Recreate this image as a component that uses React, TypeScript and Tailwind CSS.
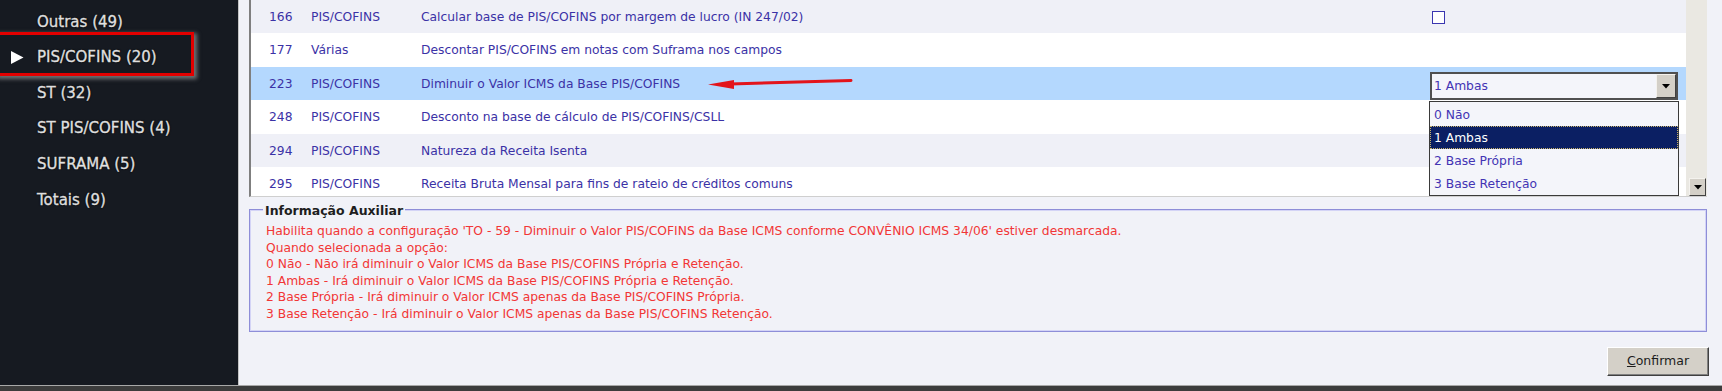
import React from "react";

type Row = {
  id: string;
  tipo: string;
  desc: string;
  bg: string;
  value?: "check" | "combo";
};

const rows: Row[] = [
  { id: "166", tipo: "PIS/COFINS", desc: "Calcular base de PIS/COFINS por margem de lucro (IN 247/02)", bg: "bg-[#eff0f7]", value: "check" },
  { id: "177", tipo: "Várias", desc: "Descontar PIS/COFINS em notas com Suframa nos campos", bg: "bg-white" },
  { id: "223", tipo: "PIS/COFINS", desc: "Diminuir o Valor ICMS da Base PIS/COFINS", bg: "bg-[#b4d8fe]", value: "combo" },
  { id: "248", tipo: "PIS/COFINS", desc: "Desconto na base de cálculo de PIS/COFINS/CSLL", bg: "bg-white" },
  { id: "294", tipo: "PIS/COFINS", desc: "Natureza da Receita Isenta", bg: "bg-[#eff0f7]" },
  { id: "295", tipo: "PIS/COFINS", desc: "Receita Bruta Mensal para fins de rateio de créditos comuns", bg: "bg-white" },
];

const sideItems = ["Outras (49)", "PIS/COFINS (20)", "ST (32)", "ST PIS/COFINS (4)", "SUFRAMA (5)", "Totais (9)"];

const infoLines = [
  "Habilita quando a configuração 'TO - 59 - Diminuir o Valor PIS/COFINS da Base ICMS conforme CONVÊNIO ICMS 34/06' estiver desmarcada.",
  "Quando selecionada a opção:",
  "0 Não - Não irá diminuir o Valor ICMS da Base PIS/COFINS Própria e Retenção.",
  "1 Ambas - Irá diminuir o Valor ICMS da Base PIS/COFINS Própria e Retenção.",
  "2 Base Própria - Irá diminuir o Valor ICMS apenas da Base PIS/COFINS Própria.",
  "3 Base Retenção - Irá diminuir o Valor ICMS apenas da Base PIS/COFINS Retenção.",
];

const options = ["0 Não", "1 Ambas", "2 Base Própria", "3 Base Retenção"];

function DownTri() {
  return (
    <svg width="8" height="5" viewBox="0 0 8 5">
      <polygon points="0,0 8,0 4,4.5" fill="#000" />
    </svg>
  );
}

function Combo() {
  return (
    <div className="relative mt-[5px] w-[248px] h-[28px] border-2 border-[#505050] bg-[#f4f5fa] flex items-center">
      <span className="pl-[2px] text-[#4334b4]">1 Ambas</span>
      <div className="ml-auto w-[20px] h-[24px] bg-[#d4d0c8] border border-t-[#f4f2ee] border-l-[#f4f2ee] border-b-[#404040] border-r-[#404040] flex items-center justify-center">
        <DownTri />
      </div>
      <div className="absolute left-[-3px] top-[27px] w-[250px] h-[95px] border border-[#3a3a3a] bg-[#f4f5fa] pt-[1px] flex flex-col">
        {options.map((o, i) => (
          <div
            key={o}
            className={
              i === 1
                ? "h-[23px] flex items-center pl-[3px] bg-[#0b1f63] text-white border border-dotted border-[#c9b26a]"
                : "h-[23px] flex items-center pl-[4px] text-[#4334b4]"
            }
          >
            {o}
          </div>
        ))}
      </div>
    </div>
  );
}

export default function App() {
  return (
    <div className="relative w-[1722px] h-[391px] overflow-hidden flex flex-col bg-[#f1f2f8] font-['Tahoma','DejaVu_Sans',sans-serif]">
      <div className="flex flex-1 min-h-0">
        {/* Sidebar */}
        <div className="relative w-[238px] bg-[#161a21] pt-[4px]">
          {sideItems.map((s, i) => (
            <div key={s} className="relative h-[35.6px] flex items-center pl-[37px] text-[15px] text-[#e2e2e2] [-webkit-text-stroke:0.35px_#d8d8d8] [text-shadow:0_0_2px_#000,0_0_1px_#000]">
              {i === 1 && (
                <svg className="absolute left-[11px] top-[11px]" width="13" height="13" viewBox="0 0 13 13">
                  <polygon points="0,0 12.5,6.5 0,13" fill="#ffffff" />
                </svg>
              )}
              {s}
            </div>
          ))}
          <div className="absolute left-[-4px] top-[32px] w-[198px] h-[44px] border-[3px] border-[#e30000] shadow-[2px_2px_4px_1px_rgba(150,150,150,0.7)]" />
        </div>

        {/* Main */}
        <div className="flex-1 flex flex-col border-l border-[#c4c4c4] pl-[10px] pr-[15px]">
          {/* Grid */}
          <div className="flex h-[197px] border-l-2 border-l-[#7f7f7f] border-b border-b-[#cfcfcf]">
            <div className="flex-1 overflow-hidden text-[12.3px] text-[#3b32a6]">
              {rows.map((r) => (
                <div key={r.id} className={`h-[33.4px] pt-[1px] flex items-center ${r.bg}`}>
                  <div className="w-[60px] pl-[18px]">{r.id}</div>
                  <div className="w-[110px]">{r.tipo}</div>
                  <div className="w-[1009px]">{r.desc}</div>
                  <div className="w-[248px] flex">
                    {r.value === "check" && (
                      <div className="ml-[2px] w-[13px] h-[13px] border-[1.5px] border-[#3a36b0] bg-white" />
                    )}
                    {r.value === "combo" && <Combo />}
                  </div>
                </div>
              ))}
            </div>
            <div className="w-[21px] bg-[#eae8e2] flex flex-col justify-end pl-[3px] pr-[1px]">
              <div className="w-[17px] h-[18px] bg-[#d4d0c8] border border-t-[#f4f2ee] border-l-[#f4f2ee] border-b-[#404040] border-r-[#404040] flex items-center justify-center">
                <DownTri />
              </div>
            </div>
          </div>

          {/* Info group */}
          <div className="relative mt-[12px] h-[123px] border border-[#8e8ed8] shadow-[inset_0_0_0_1px_#d4d4f6] pl-[16px] pt-[13px]">
            <div className="absolute -top-[6px] left-[13px] px-[2px] bg-[#f1f2f8] text-[12.5px] font-bold text-[#1e1e1e] leading-[14px]">
              Informação Auxiliar
            </div>
            <div className="text-[12.3px] leading-[16.6px] text-[#f23636]">
              {infoLines.map((l) => (
                <div key={l}>{l}</div>
              ))}
            </div>
          </div>

          {/* Buttons */}
          <div className="flex justify-end mt-[15px] -mr-[2px]">
            <button className="w-[102px] h-[29px] bg-[#d4d0c8] border border-t-[#ffffff] border-l-[#ffffff] border-b-[#404040] border-r-[#404040] shadow-[inset_-1px_-1px_0_#808080] text-[12.5px] text-[#1c1c1c]">
              <span className="underline">C</span>onfirmar
            </button>
          </div>
        </div>
      </div>
      <div className="h-[6px] border-t border-[#a8a8a8] bg-[#3c3c3c]" />

      {/* Red annotation arrow */}
      <svg className="absolute left-[700px] top-[72px]" width="160" height="20" viewBox="0 0 160 20">
        <line x1="30" y1="12" x2="151" y2="8.5" stroke="#e3141b" strokeWidth="3" strokeLinecap="round" />
        <polygon points="8,12.5 34,8 34,17" fill="#e3141b" />
      </svg>
    </div>
  );
}
